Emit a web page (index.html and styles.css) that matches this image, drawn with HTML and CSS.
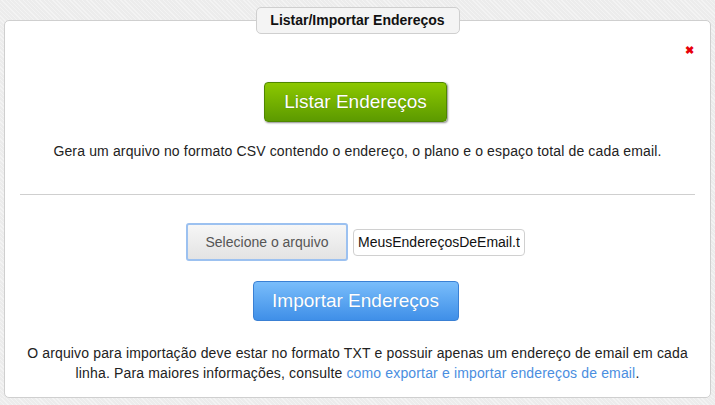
FILE: index.html
```html
<!DOCTYPE html>
<html lang="pt-BR">
<head>
    <meta charset="UTF-8">
    <title>Listar/Importar Endereços</title>
    <link rel="stylesheet" href="styles.css">
</head>
<body>
    <div class="painel">
        <div class="aba">Listar/Importar Endereços</div>
        <span class="fechar">&#10006;</span>
        <div class="bloco_listar">
            <button class="botao botao_verde">Listar Endereços</button>
            <p class="texto">Gera um arquivo no formato CSV contendo o endereço, o plano e o espaço total de cada email.</p>
        </div>
        <hr class="divisor">
        <div class="bloco_importar">
            <div class="linha_arquivo">
                <button class="botao_arquivo">Selecione o arquivo</button>
                <input type="text" class="caixa_arquivo" value="MeusEndereçosDeEmail.txt">
            </div>
            <button class="botao botao_azul">Importar Endereços</button>
            <p class="texto">O arquivo para importação deve estar no formato TXT e possuir apenas um endereço de email em cada linha. Para maiores informações, consulte <a href="#">como exportar e importar endereços de email</a>.</p>
        </div>
    </div>
</body>
</html>
```
FILE: styles.css
```css
body{
    margin:0;
    padding:20px 4px 0 4px;
    background-color:#ececec;
    background-image:repeating-linear-gradient(45deg, rgba(255,255,255,0.35) 0 1px, transparent 1px 3px);
    font-family:'Liberation Sans', Arial, sans-serif;
    color:#222;
}
.painel{
    position:relative;
    background-color:#fff;
    border:1px solid #cfcfcf;
    border-radius:5px;
    height:376px;
    padding:0 15px;
    box-sizing:content-box;
}
.aba{
    position:absolute;
    top:-14px;
    left:50%;
    transform:translateX(-50%);
    width:202px;
    height:25px;
    line-height:25px;
    text-align:center;
    background-color:#f4f4f4;
    border:1px solid #cfcfcf;
    border-radius:5px;
    font-size:14px;
    font-weight:bold;
    color:#111;
}
.fechar{
    position:absolute;
    top:23px;
    right:16px;
    color:#e8000b;
    font-size:11px;
    font-weight:bold;
}
.bloco_listar{
    padding-top:61px;
    text-align:center;
}
.botao{
    display:inline-block;
    font-family:'Liberation Sans', Arial, sans-serif;
    font-size:19px;
    color:#fff;
    border-radius:4px;
    cursor:pointer;
}
.botao_verde{
    width:183px;
    height:40px;
    margin-right:4px;
    background:linear-gradient(#8cc800, #5c9a00);
    border:1px solid #4f8700;
    box-shadow:1px 1px 2px rgba(0,0,0,0.45);
    text-shadow:0 0 1px rgba(0,0,0,0.3);
}
.botao_azul{
    width:206px;
    height:40px;
    margin-right:4px;
    background:linear-gradient(#79bdfb, #3f8fe8);
    border:1px solid #3a80d4;
    text-shadow:0 0 1px rgba(0,0,0,0.15);
}
.texto{
    font-size:14px;
    line-height:20px;
    letter-spacing:0.15px;
    margin:19px 0 0 0;
    text-align:center;
}
.texto a{
    color:#4a8ee0;
    text-decoration:none;
}
.divisor{
    border:none;
    border-top:1px solid #cfcfcf;
    margin:33px 0 0 0;
}
.bloco_importar{
    padding-top:28px;
    text-align:center;
}
.linha_arquivo{
    display:flex;
    justify-content:center;
    align-items:center;
    gap:5px;
    margin-bottom:20px;
    padding-right:4px;
}
.botao_arquivo{
    width:162px;
    height:38px;
    background:linear-gradient(#f6f6f6, #e3e3e3);
    border:2px solid #9cc1f0;
    border-radius:3px;
    font-family:'Liberation Sans', Arial, sans-serif;
    font-size:14px;
    color:#555;
}
.caixa_arquivo{
    width:172px;
    height:27px;
    box-sizing:border-box;
    border:1px solid #d0d0d0;
    border-radius:4px;
    padding:0 4px;
    font-family:'Liberation Sans', Arial, sans-serif;
    font-size:14px;
    color:#111;
}
.bloco_importar .texto{
    margin-top:22px;
}
```
